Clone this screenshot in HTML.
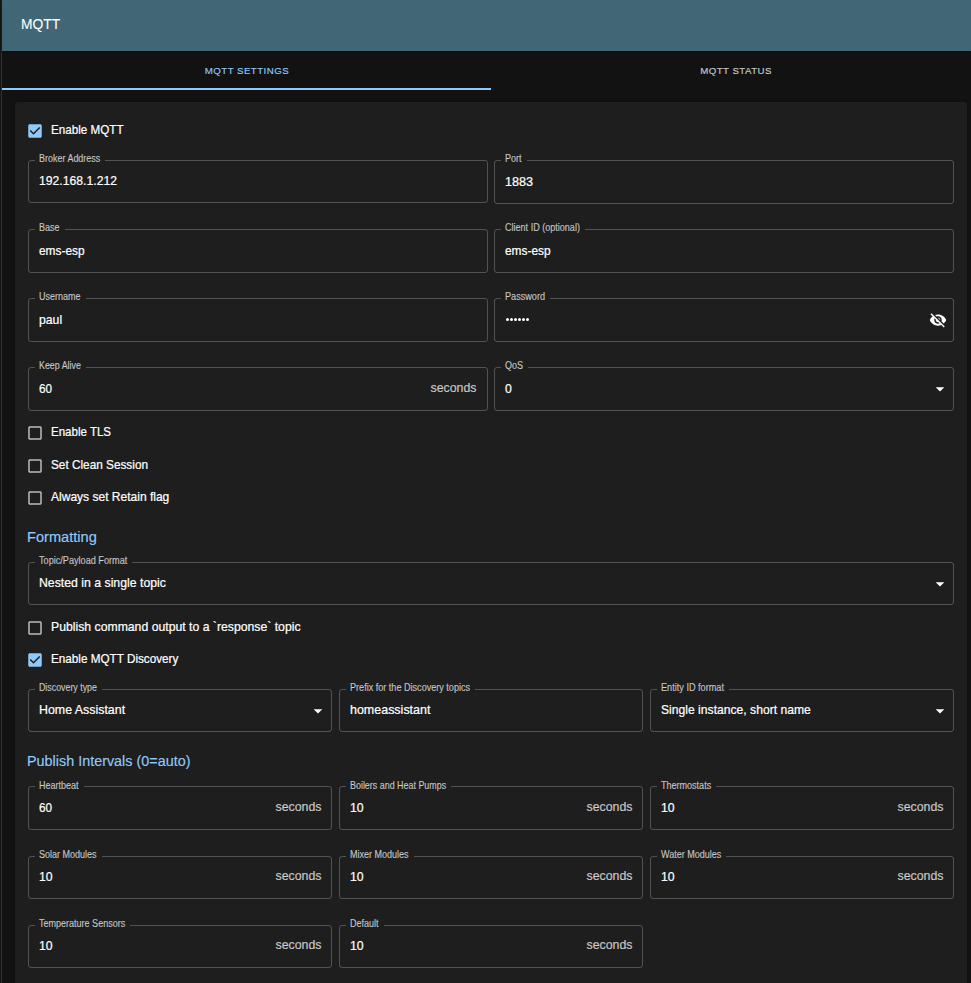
<!DOCTYPE html><html><head><meta charset="utf-8"><title>MQTT</title><style>
html,body{margin:0;padding:0;}
body{width:971px;height:983px;overflow:hidden;background:#121212;position:relative;font-family:"Liberation Sans",sans-serif;}
.t{position:absolute;white-space:nowrap;transform-origin:0 0;}
.f{position:absolute;box-sizing:border-box;border:1px solid rgba(255,255,255,0.23);border-radius:3px;}
.gap{position:absolute;height:3px;background:#1e1e1e;}
.ic{position:absolute;display:block;}
.sec{color:rgba(255,255,255,0.7);}
</style></head><body>
<div style="position:absolute;left:0;top:0;width:1px;height:983px;background:#151515"></div>
<div style="position:absolute;left:1px;top:0;width:1px;height:983px;background:#2f2f2f"></div>
<div style="position:absolute;left:1px;top:0;width:1px;height:50px;background:#202020"></div>
<div style="position:absolute;left:2px;top:0;width:969px;height:51px;background:#416676;box-shadow:0 1px 2px rgba(0,0,0,0.5)"></div>
<div style="position:absolute;left:2px;top:88px;width:489px;height:2px;background:#90caf9"></div>
<div style="position:absolute;left:15px;top:102px;width:952px;height:900px;background:#1e1e1e;border-radius:3px;box-shadow:0 0 2px rgba(0,0,0,0.6)"></div>

<div class="t" style="left:21.00px;top:16.98px;font-size:14.2px;line-height:14.2px;color:#fff;font-weight:400;transform:scaleX(0.975);-webkit-text-stroke:0.08px currentColor;">MQTT</div>
<div class="t" style="left:204.80px;top:65.99px;font-size:9.7px;line-height:9.7px;color:#90caf9;font-weight:400;transform:scaleX(1.0);letter-spacing:0.45px;-webkit-text-stroke:0.15px currentColor;">MQTT SETTINGS</div>
<div class="t" style="left:700.20px;top:65.99px;font-size:9.7px;line-height:9.7px;color:rgba(255,255,255,0.7);font-weight:400;transform:scaleX(1.0);letter-spacing:0.45px;-webkit-text-stroke:0.2px currentColor;">MQTT STATUS</div>
<svg class="ic" style="left:25.75px;top:121.75px" width="18" height="18" viewBox="0 0 24 24"><path fill="#90caf9" d="M19 3H5c-1.11 0-2 .9-2 2v14c0 1.1.89 2 2 2h14c1.11 0 2-.9 2-2V5c0-1.1-.89-2-2-2zm-9 14l-5-5 1.41-1.41L10 14.17l7.59-7.59L19 8l-9 9z"/></svg>
<div class="t" style="left:50.50px;top:123.00px;font-size:13.0px;line-height:13.0px;color:#fff;font-weight:400;transform:scaleX(0.896);-webkit-text-stroke:0.22px currentColor;">Enable MQTT</div>
<div class="f" style="left:28px;top:160px;width:460px;height:43px"></div>
<div class="gap" style="left:35px;top:159px;width:70.4px"></div>
<div class="t" style="left:39.40px;top:153.57px;font-size:10.2px;line-height:10.2px;color:rgba(255,255,255,0.7);font-weight:400;transform:scaleX(0.88);-webkit-text-stroke:0.15px currentColor;">Broker Address</div>
<div class="t" style="left:39.00px;top:173.94px;font-size:13.3px;line-height:13.3px;color:#fff;font-weight:400;transform:scaleX(0.917);-webkit-text-stroke:0.22px currentColor;">192.168.1.212</div>
<div class="f" style="left:494px;top:160px;width:460px;height:44px"></div>
<div class="gap" style="left:501px;top:159px;width:25.6px"></div>
<div class="t" style="left:505.40px;top:153.57px;font-size:10.2px;line-height:10.2px;color:rgba(255,255,255,0.7);font-weight:400;transform:scaleX(0.885);-webkit-text-stroke:0.15px currentColor;">Port</div>
<div class="t" style="left:505.00px;top:174.94px;font-size:13.3px;line-height:13.3px;color:#fff;font-weight:400;transform:scaleX(0.95);-webkit-text-stroke:0.22px currentColor;">1883</div>
<div class="f" style="left:28px;top:229px;width:460px;height:44px"></div>
<div class="gap" style="left:35px;top:228px;width:29.6px"></div>
<div class="t" style="left:39.40px;top:222.57px;font-size:10.2px;line-height:10.2px;color:rgba(255,255,255,0.7);font-weight:400;transform:scaleX(0.885);-webkit-text-stroke:0.15px currentColor;">Base</div>
<div class="t" style="left:39.00px;top:243.94px;font-size:13.3px;line-height:13.3px;color:#fff;font-weight:400;transform:scaleX(0.894);-webkit-text-stroke:0.22px currentColor;">ems-esp</div>
<div class="f" style="left:494px;top:229px;width:460px;height:44px"></div>
<div class="gap" style="left:501px;top:228px;width:84.0px"></div>
<div class="t" style="left:505.40px;top:222.57px;font-size:10.2px;line-height:10.2px;color:rgba(255,255,255,0.7);font-weight:400;transform:scaleX(0.888);-webkit-text-stroke:0.15px currentColor;">Client ID (optional)</div>
<div class="t" style="left:505.00px;top:243.94px;font-size:13.3px;line-height:13.3px;color:#fff;font-weight:400;transform:scaleX(0.894);-webkit-text-stroke:0.22px currentColor;">ems-esp</div>
<div class="f" style="left:28px;top:298px;width:460px;height:44px"></div>
<div class="gap" style="left:35px;top:297px;width:50.6px"></div>
<div class="t" style="left:39.40px;top:291.57px;font-size:10.2px;line-height:10.2px;color:rgba(255,255,255,0.7);font-weight:400;transform:scaleX(0.885);-webkit-text-stroke:0.15px currentColor;">Username</div>
<div class="t" style="left:39.00px;top:312.94px;font-size:13.3px;line-height:13.3px;color:#fff;font-weight:400;transform:scaleX(0.92);-webkit-text-stroke:0.22px currentColor;">paul</div>
<div class="f" style="left:494px;top:298px;width:460px;height:44px"></div>
<div class="gap" style="left:501px;top:297px;width:49.1px"></div>
<div class="t" style="left:505.40px;top:291.57px;font-size:10.2px;line-height:10.2px;color:rgba(255,255,255,0.7);font-weight:400;transform:scaleX(0.895);-webkit-text-stroke:0.15px currentColor;">Password</div>
<svg class="ic" style="left:929px;top:310.9px" width="18" height="18" viewBox="0 0 24 24"><path fill="#fff" d="M12 7c2.76 0 5 2.24 5 5 0 .65-.13 1.26-.36 1.83l2.92 2.92c1.51-1.26 2.7-2.89 3.43-4.75-1.73-4.39-6-7.5-11-7.5-1.4 0-2.74.25-3.98.7l2.16 2.16C10.74 7.13 11.35 7 12 7zM2 4.27l2.28 2.28.46.46C3.08 8.3 1.78 10.02 1 12c1.73 4.39 6 7.5 11 7.5 1.55 0 3.03-.3 4.38-.84l.42.42L19.73 22 21 20.73 3.27 3 2 4.27zM7.53 9.8l1.55 1.55c-.05.21-.08.43-.08.65 0 1.66 1.34 3 3 3 .22 0 .44-.03.65-.08l1.55 1.55c-.67.33-1.41.53-2.2.53-2.76 0-5-2.24-5-5 0-.79.2-1.53.53-2.2zm4.31-.78l3.15 3.15.02-.16c0-1.66-1.34-3-3-3l-.17.01z"/></svg>
<div style="position:absolute;left:505.80px;top:317.7px;width:3.2px;height:3.2px;border-radius:50%;background:#fff"></div><div style="position:absolute;left:509.88px;top:317.7px;width:3.2px;height:3.2px;border-radius:50%;background:#fff"></div><div style="position:absolute;left:513.96px;top:317.7px;width:3.2px;height:3.2px;border-radius:50%;background:#fff"></div><div style="position:absolute;left:518.04px;top:317.7px;width:3.2px;height:3.2px;border-radius:50%;background:#fff"></div><div style="position:absolute;left:522.12px;top:317.7px;width:3.2px;height:3.2px;border-radius:50%;background:#fff"></div><div style="position:absolute;left:526.20px;top:317.7px;width:3.2px;height:3.2px;border-radius:50%;background:#fff"></div>
<div class="f" style="left:28px;top:367px;width:460px;height:44px"></div>
<div class="gap" style="left:35px;top:366px;width:50.9px"></div>
<div class="t" style="left:39.40px;top:360.57px;font-size:10.2px;line-height:10.2px;color:rgba(255,255,255,0.7);font-weight:400;transform:scaleX(0.869);-webkit-text-stroke:0.15px currentColor;">Keep Alive</div>
<div class="t" style="left:39.00px;top:381.94px;font-size:13.3px;line-height:13.3px;color:#fff;font-weight:400;transform:scaleX(0.88);-webkit-text-stroke:0.22px currentColor;">60</div>
<div class="t sec" style="right:494.3px;top:380.94px;font-size:13.3px;line-height:13.3px;transform:scaleX(0.93);transform-origin:100% 0;-webkit-text-stroke:0.22px currentColor;">seconds</div>
<div class="f" style="left:494px;top:367px;width:460px;height:44px"></div>
<div class="gap" style="left:501px;top:366px;width:27.1px"></div>
<div class="t" style="left:505.40px;top:360.57px;font-size:10.2px;line-height:10.2px;color:rgba(255,255,255,0.7);font-weight:400;transform:scaleX(0.885);-webkit-text-stroke:0.15px currentColor;">QoS</div>
<div class="t" style="left:505.00px;top:381.94px;font-size:13.3px;line-height:13.3px;color:#fff;font-weight:400;transform:scaleX(0.92);-webkit-text-stroke:0.22px currentColor;">0</div>
<svg class="ic" style="left:935px;top:387px" width="10" height="5" viewBox="0 0 10 5"><path d="M0.7 0.2H9.3L5 4.4Z" fill="#fff"/></svg>
<svg class="ic" style="left:25.75px;top:423.75px" width="18" height="18" viewBox="0 0 24 24"><path fill="rgba(255,255,255,0.7)" d="M19 5v14H5V5h14m0-2H5c-1.1 0-2 .9-2 2v14c0 1.1.9 2 2 2h14c1.1 0 2-.9 2-2V5c0-1.1-.9-2-2-2z"/></svg>
<div class="t" style="left:50.50px;top:425.00px;font-size:13.0px;line-height:13.0px;color:#fff;font-weight:400;transform:scaleX(0.887);-webkit-text-stroke:0.22px currentColor;">Enable TLS</div>
<svg class="ic" style="left:25.75px;top:456.75px" width="18" height="18" viewBox="0 0 24 24"><path fill="rgba(255,255,255,0.7)" d="M19 5v14H5V5h14m0-2H5c-1.1 0-2 .9-2 2v14c0 1.1.9 2 2 2h14c1.1 0 2-.9 2-2V5c0-1.1-.9-2-2-2z"/></svg>
<div class="t" style="left:50.50px;top:458.00px;font-size:13.0px;line-height:13.0px;color:#fff;font-weight:400;transform:scaleX(0.907);-webkit-text-stroke:0.22px currentColor;">Set Clean Session</div>
<svg class="ic" style="left:25.75px;top:488.75px" width="18" height="18" viewBox="0 0 24 24"><path fill="rgba(255,255,255,0.7)" d="M19 5v14H5V5h14m0-2H5c-1.1 0-2 .9-2 2v14c0 1.1.9 2 2 2h14c1.1 0 2-.9 2-2V5c0-1.1-.9-2-2-2z"/></svg>
<div class="t" style="left:50.50px;top:490.00px;font-size:13.0px;line-height:13.0px;color:#fff;font-weight:400;transform:scaleX(0.925);-webkit-text-stroke:0.22px currentColor;">Always set Retain flag</div>
<div class="t" style="left:26.80px;top:529.56px;font-size:14.7px;line-height:14.7px;color:#90caf9;font-weight:400;transform:scaleX(0.994);-webkit-text-stroke:0.15px currentColor;">Formatting</div>
<div class="f" style="left:28px;top:562px;width:926px;height:43px"></div>
<div class="gap" style="left:35px;top:561px;width:97.4px"></div>
<div class="t" style="left:39.40px;top:555.57px;font-size:10.2px;line-height:10.2px;color:rgba(255,255,255,0.7);font-weight:400;transform:scaleX(0.896);-webkit-text-stroke:0.15px currentColor;">Topic/Payload Format</div>
<div class="t" style="left:39.00px;top:575.94px;font-size:13.3px;line-height:13.3px;color:#fff;font-weight:400;transform:scaleX(0.923);-webkit-text-stroke:0.22px currentColor;">Nested in a single topic</div>
<svg class="ic" style="left:935px;top:582px" width="10" height="5" viewBox="0 0 10 5"><path d="M0.7 0.2H9.3L5 4.4Z" fill="#fff"/></svg>
<svg class="ic" style="left:25.75px;top:618.75px" width="18" height="18" viewBox="0 0 24 24"><path fill="rgba(255,255,255,0.7)" d="M19 5v14H5V5h14m0-2H5c-1.1 0-2 .9-2 2v14c0 1.1.9 2 2 2h14c1.1 0 2-.9 2-2V5c0-1.1-.9-2-2-2z"/></svg>
<div class="t" style="left:50.50px;top:620.00px;font-size:13.0px;line-height:13.0px;color:#fff;font-weight:400;transform:scaleX(0.941);-webkit-text-stroke:0.22px currentColor;">Publish command output to a `response` topic</div>
<svg class="ic" style="left:25.75px;top:650.75px" width="18" height="18" viewBox="0 0 24 24"><path fill="#90caf9" d="M19 3H5c-1.11 0-2 .9-2 2v14c0 1.1.89 2 2 2h14c1.11 0 2-.9 2-2V5c0-1.1-.89-2-2-2zm-9 14l-5-5 1.41-1.41L10 14.17l7.59-7.59L19 8l-9 9z"/></svg>
<div class="t" style="left:50.50px;top:652.00px;font-size:13.0px;line-height:13.0px;color:#fff;font-weight:400;transform:scaleX(0.901);-webkit-text-stroke:0.22px currentColor;">Enable MQTT Discovery</div>
<div class="f" style="left:28px;top:689px;width:304px;height:43px"></div>
<div class="gap" style="left:35px;top:688px;width:66.9px"></div>
<div class="t" style="left:39.40px;top:682.57px;font-size:10.2px;line-height:10.2px;color:rgba(255,255,255,0.7);font-weight:400;transform:scaleX(0.866);-webkit-text-stroke:0.15px currentColor;">Discovery type</div>
<div class="t" style="left:39.00px;top:702.94px;font-size:13.3px;line-height:13.3px;color:#fff;font-weight:400;transform:scaleX(0.932);-webkit-text-stroke:0.22px currentColor;">Home Assistant</div>
<svg class="ic" style="left:313px;top:709px" width="10" height="5" viewBox="0 0 10 5"><path d="M0.7 0.2H9.3L5 4.4Z" fill="#fff"/></svg>
<div class="f" style="left:339px;top:689px;width:304px;height:43px"></div>
<div class="gap" style="left:346px;top:688px;width:129.2px"></div>
<div class="t" style="left:350.40px;top:682.57px;font-size:10.2px;line-height:10.2px;color:rgba(255,255,255,0.7);font-weight:400;transform:scaleX(0.891);-webkit-text-stroke:0.15px currentColor;">Prefix for the Discovery topics</div>
<div class="t" style="left:350.00px;top:702.94px;font-size:13.3px;line-height:13.3px;color:#fff;font-weight:400;transform:scaleX(0.938);-webkit-text-stroke:0.22px currentColor;">homeassistant</div>
<div class="f" style="left:650px;top:689px;width:304px;height:43px"></div>
<div class="gap" style="left:657px;top:688px;width:72.0px"></div>
<div class="t" style="left:661.40px;top:682.57px;font-size:10.2px;line-height:10.2px;color:rgba(255,255,255,0.7);font-weight:400;transform:scaleX(0.897);-webkit-text-stroke:0.15px currentColor;">Entity ID format</div>
<div class="t" style="left:661.00px;top:702.94px;font-size:13.3px;line-height:13.3px;color:#fff;font-weight:400;transform:scaleX(0.913);-webkit-text-stroke:0.22px currentColor;">Single instance, short name</div>
<svg class="ic" style="left:935px;top:709px" width="10" height="5" viewBox="0 0 10 5"><path d="M0.7 0.2H9.3L5 4.4Z" fill="#fff"/></svg>
<div class="t" style="left:26.90px;top:753.56px;font-size:14.7px;line-height:14.7px;color:#90caf9;font-weight:400;transform:scaleX(0.979);-webkit-text-stroke:0.15px currentColor;">Publish Intervals (0=auto)</div>
<div class="f" style="left:28px;top:786px;width:304px;height:44px"></div>
<div class="gap" style="left:35px;top:785px;width:48.6px"></div>
<div class="t" style="left:39.40px;top:780.57px;font-size:10.2px;line-height:10.2px;color:rgba(255,255,255,0.7);font-weight:400;transform:scaleX(0.885);-webkit-text-stroke:0.15px currentColor;">Heartbeat</div>
<div class="t" style="left:39.00px;top:800.94px;font-size:13.3px;line-height:13.3px;color:#fff;font-weight:400;transform:scaleX(0.88);-webkit-text-stroke:0.22px currentColor;">60</div>
<div class="t sec" style="right:649.6px;top:799.94px;font-size:13.3px;line-height:13.3px;transform:scaleX(0.93);transform-origin:100% 0;-webkit-text-stroke:0.22px currentColor;">seconds</div>
<div class="f" style="left:339px;top:786px;width:304px;height:44px"></div>
<div class="gap" style="left:346px;top:785px;width:105.2px"></div>
<div class="t" style="left:350.40px;top:780.57px;font-size:10.2px;line-height:10.2px;color:rgba(255,255,255,0.7);font-weight:400;transform:scaleX(0.875);-webkit-text-stroke:0.15px currentColor;">Boilers and Heat Pumps</div>
<div class="t" style="left:350.00px;top:800.94px;font-size:13.3px;line-height:13.3px;color:#fff;font-weight:400;transform:scaleX(0.921);-webkit-text-stroke:0.22px currentColor;">10</div>
<div class="t sec" style="right:338.6px;top:799.94px;font-size:13.3px;line-height:13.3px;transform:scaleX(0.93);transform-origin:100% 0;-webkit-text-stroke:0.22px currentColor;">seconds</div>
<div class="f" style="left:650px;top:786px;width:304px;height:44px"></div>
<div class="gap" style="left:657px;top:785px;width:59.2px"></div>
<div class="t" style="left:661.40px;top:780.57px;font-size:10.2px;line-height:10.2px;color:rgba(255,255,255,0.7);font-weight:400;transform:scaleX(0.886);-webkit-text-stroke:0.15px currentColor;">Thermostats</div>
<div class="t" style="left:661.00px;top:800.94px;font-size:13.3px;line-height:13.3px;color:#fff;font-weight:400;transform:scaleX(0.921);-webkit-text-stroke:0.22px currentColor;">10</div>
<div class="t sec" style="right:27.6px;top:799.94px;font-size:13.3px;line-height:13.3px;transform:scaleX(0.93);transform-origin:100% 0;-webkit-text-stroke:0.22px currentColor;">seconds</div>
<div class="f" style="left:28px;top:856px;width:304px;height:43px"></div>
<div class="gap" style="left:35px;top:855px;width:66.7px"></div>
<div class="t" style="left:39.40px;top:849.57px;font-size:10.2px;line-height:10.2px;color:rgba(255,255,255,0.7);font-weight:400;transform:scaleX(0.885);-webkit-text-stroke:0.15px currentColor;">Solar Modules</div>
<div class="t" style="left:39.00px;top:869.94px;font-size:13.3px;line-height:13.3px;color:#fff;font-weight:400;transform:scaleX(0.921);-webkit-text-stroke:0.22px currentColor;">10</div>
<div class="t sec" style="right:649.6px;top:868.94px;font-size:13.3px;line-height:13.3px;transform:scaleX(0.93);transform-origin:100% 0;-webkit-text-stroke:0.22px currentColor;">seconds</div>
<div class="f" style="left:339px;top:856px;width:304px;height:43px"></div>
<div class="gap" style="left:346px;top:855px;width:67.7px"></div>
<div class="t" style="left:350.40px;top:849.57px;font-size:10.2px;line-height:10.2px;color:rgba(255,255,255,0.7);font-weight:400;transform:scaleX(0.885);-webkit-text-stroke:0.15px currentColor;">Mixer Modules</div>
<div class="t" style="left:350.00px;top:869.94px;font-size:13.3px;line-height:13.3px;color:#fff;font-weight:400;transform:scaleX(0.921);-webkit-text-stroke:0.22px currentColor;">10</div>
<div class="t sec" style="right:338.6px;top:868.94px;font-size:13.3px;line-height:13.3px;transform:scaleX(0.93);transform-origin:100% 0;-webkit-text-stroke:0.22px currentColor;">seconds</div>
<div class="f" style="left:650px;top:856px;width:304px;height:43px"></div>
<div class="gap" style="left:657px;top:855px;width:69.4px"></div>
<div class="t" style="left:661.40px;top:849.57px;font-size:10.2px;line-height:10.2px;color:rgba(255,255,255,0.7);font-weight:400;transform:scaleX(0.885);-webkit-text-stroke:0.15px currentColor;">Water Modules</div>
<div class="t" style="left:661.00px;top:869.94px;font-size:13.3px;line-height:13.3px;color:#fff;font-weight:400;transform:scaleX(0.921);-webkit-text-stroke:0.22px currentColor;">10</div>
<div class="t sec" style="right:27.6px;top:868.94px;font-size:13.3px;line-height:13.3px;transform:scaleX(0.93);transform-origin:100% 0;-webkit-text-stroke:0.22px currentColor;">seconds</div>
<div class="f" style="left:28px;top:925px;width:304px;height:43px"></div>
<div class="gap" style="left:35px;top:924px;width:95.3px"></div>
<div class="t" style="left:39.40px;top:918.57px;font-size:10.2px;line-height:10.2px;color:rgba(255,255,255,0.7);font-weight:400;transform:scaleX(0.885);-webkit-text-stroke:0.15px currentColor;">Temperature Sensors</div>
<div class="t" style="left:39.00px;top:938.94px;font-size:13.3px;line-height:13.3px;color:#fff;font-weight:400;transform:scaleX(0.921);-webkit-text-stroke:0.22px currentColor;">10</div>
<div class="t sec" style="right:649.6px;top:937.94px;font-size:13.3px;line-height:13.3px;transform:scaleX(0.93);transform-origin:100% 0;-webkit-text-stroke:0.22px currentColor;">seconds</div>
<div class="f" style="left:339px;top:925px;width:304px;height:43px"></div>
<div class="gap" style="left:346px;top:924px;width:37.6px"></div>
<div class="t" style="left:350.40px;top:918.57px;font-size:10.2px;line-height:10.2px;color:rgba(255,255,255,0.7);font-weight:400;transform:scaleX(0.885);-webkit-text-stroke:0.15px currentColor;">Default</div>
<div class="t" style="left:350.00px;top:938.94px;font-size:13.3px;line-height:13.3px;color:#fff;font-weight:400;transform:scaleX(0.921);-webkit-text-stroke:0.22px currentColor;">10</div>
<div class="t sec" style="right:338.6px;top:937.94px;font-size:13.3px;line-height:13.3px;transform:scaleX(0.93);transform-origin:100% 0;-webkit-text-stroke:0.22px currentColor;">seconds</div>
</body></html>
